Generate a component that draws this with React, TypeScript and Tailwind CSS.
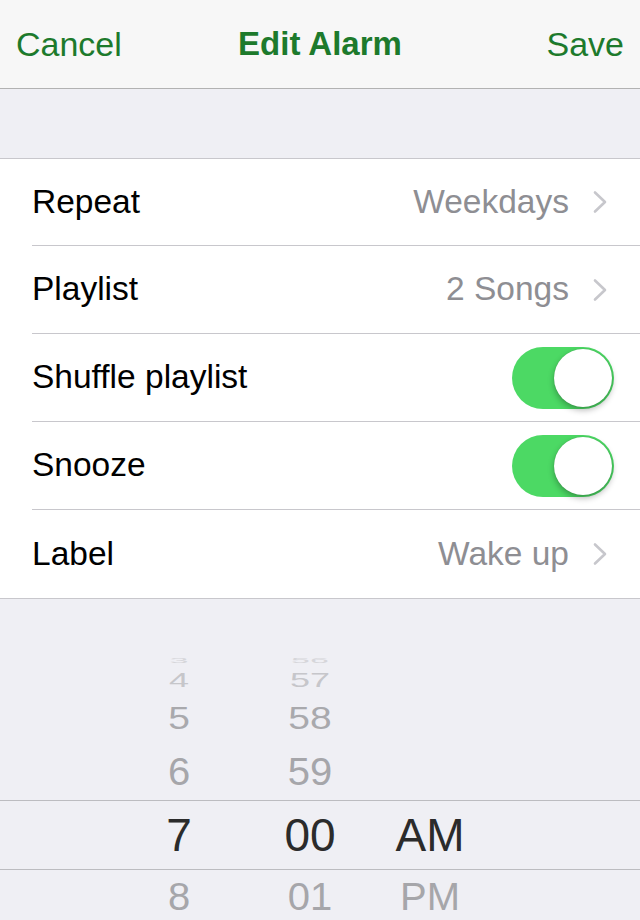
const Chevron = () => (
  <svg width="17" height="24" viewBox="0 0 17 24" fill="none">
    <path d="M3 2.5 L13 12 L3 21.5" stroke="#c7c7cc" strokeWidth="2.6" strokeLinecap="round" strokeLinejoin="round" />
  </svg>
);

const Toggle = () => (
  <div className="w-[102px] h-[62px] rounded-full bg-[#4cd964] flex justify-end items-center pr-[2px]">
    <div className="w-[58px] h-[58px] rounded-full bg-white shadow-[0_3px_6px_rgba(0,0,0,0.3),0_0_1px_rgba(0,0,0,0.2)]" />
  </div>
);

type RowProps = {
  label: string;
  value?: string;
  toggle?: boolean;
  first?: boolean;
  last?: boolean;
};

const Row = ({ label, value, toggle, first, last }: RowProps) => (
  <div className="pl-8">
    <div
      className={`flex items-center justify-between ${first ? "h-[87px]" : "h-[88px]"} ${
        last ? "" : "border-b border-[#c8c7cc]"
      } ${toggle ? "pr-[26px]" : "pr-[31px]"}`}
    >
      <span className="text-[33.5px] text-black">{label}</span>
      {toggle ? (
        <Toggle />
      ) : (
        <div className="flex items-center gap-[23px]">
          <span className="text-[33.5px] text-[#8e8e93]">{value}</span>
          <Chevron />
        </div>
      )}
    </div>
  </div>
);

type PickRow = {
  h: string;
  m: string;
  height: string;
  text: string;
};

const pickRows: PickRow[] = [
  { h: "3", m: "56", height: "h-[12px]", text: "text-[34px] text-[#d6d6da] scale-y-[0.2]" },
  { h: "4", m: "57", height: "h-[26px]", text: "text-[36px] text-[#c6c6ca] scale-y-[0.55]" },
  { h: "5", m: "58", height: "h-[50px]", text: "text-[39px] text-[#a9a9ad] scale-y-[0.8]" },
  { h: "6", m: "59", height: "h-[57px]", text: "text-[40px] text-[#a6a6aa] scale-y-[0.95]" },
];

export default function App() {
  return (
    <div className="w-[640px] h-[920px] overflow-hidden bg-[#efeff4]" style={{ fontFamily: '"Liberation Sans", Arial, sans-serif' }}>
      {/* nav bar */}
      <div className="h-[89px] bg-[#f7f7f7] border-b border-[#b2b2b2] flex items-center px-4 text-[#1d7a2c] text-[34px]">
        <div className="flex-1">Cancel</div>
        <div className="font-bold text-[33px]">Edit Alarm</div>
        <div className="flex-1 flex justify-end">Save</div>
      </div>

      <div className="h-[69px]" />

      <div className="bg-white border-y border-[#c8c7cc]">
        <Row label="Repeat" value="Weekdays" first />
        <Row label="Playlist" value="2 Songs" />
        <Row label="Shuffle playlist" toggle />
        <Row label="Snooze" toggle />
        <Row label="Label" value="Wake up" last />
      </div>

      {/* time picker */}
      <div className="pt-[56px]">
        {pickRows.map((r) => (
          <div key={r.h} className={`flex ${r.height} items-center overflow-hidden leading-none`}>
            <div className="w-[119px]" />
            <div className="w-[120px] flex justify-center">
              <span className={`inline-block ${r.text}`}>{r.h}</span>
            </div>
            <div className="w-[142px] flex justify-center">
              <span className={`inline-block ${r.text}`}>{r.m}</span>
            </div>
          </div>
        ))}
        <div className="flex h-[70px] items-center border-y border-[#bcbcc0] leading-none text-[46px] text-[#2b2b2b]">
          <div className="w-[119px]" />
          <div className="w-[120px] flex justify-center">7</div>
          <div className="w-[142px] flex justify-center">00</div>
          <div className="w-[98px] flex justify-center">AM</div>
        </div>
        <div className="flex h-[54px] items-center leading-none text-[40px] text-[#a6a6aa]">
          <div className="w-[119px]" />
          <div className="w-[120px] flex justify-center">
            <span className="inline-block scale-y-[0.95]">8</span>
          </div>
          <div className="w-[142px] flex justify-center">
            <span className="inline-block scale-y-[0.95]">01</span>
          </div>
          <div className="w-[98px] flex justify-center">
            <span className="inline-block scale-y-[0.95]">PM</span>
          </div>
        </div>
      </div>
    </div>
  );
}
